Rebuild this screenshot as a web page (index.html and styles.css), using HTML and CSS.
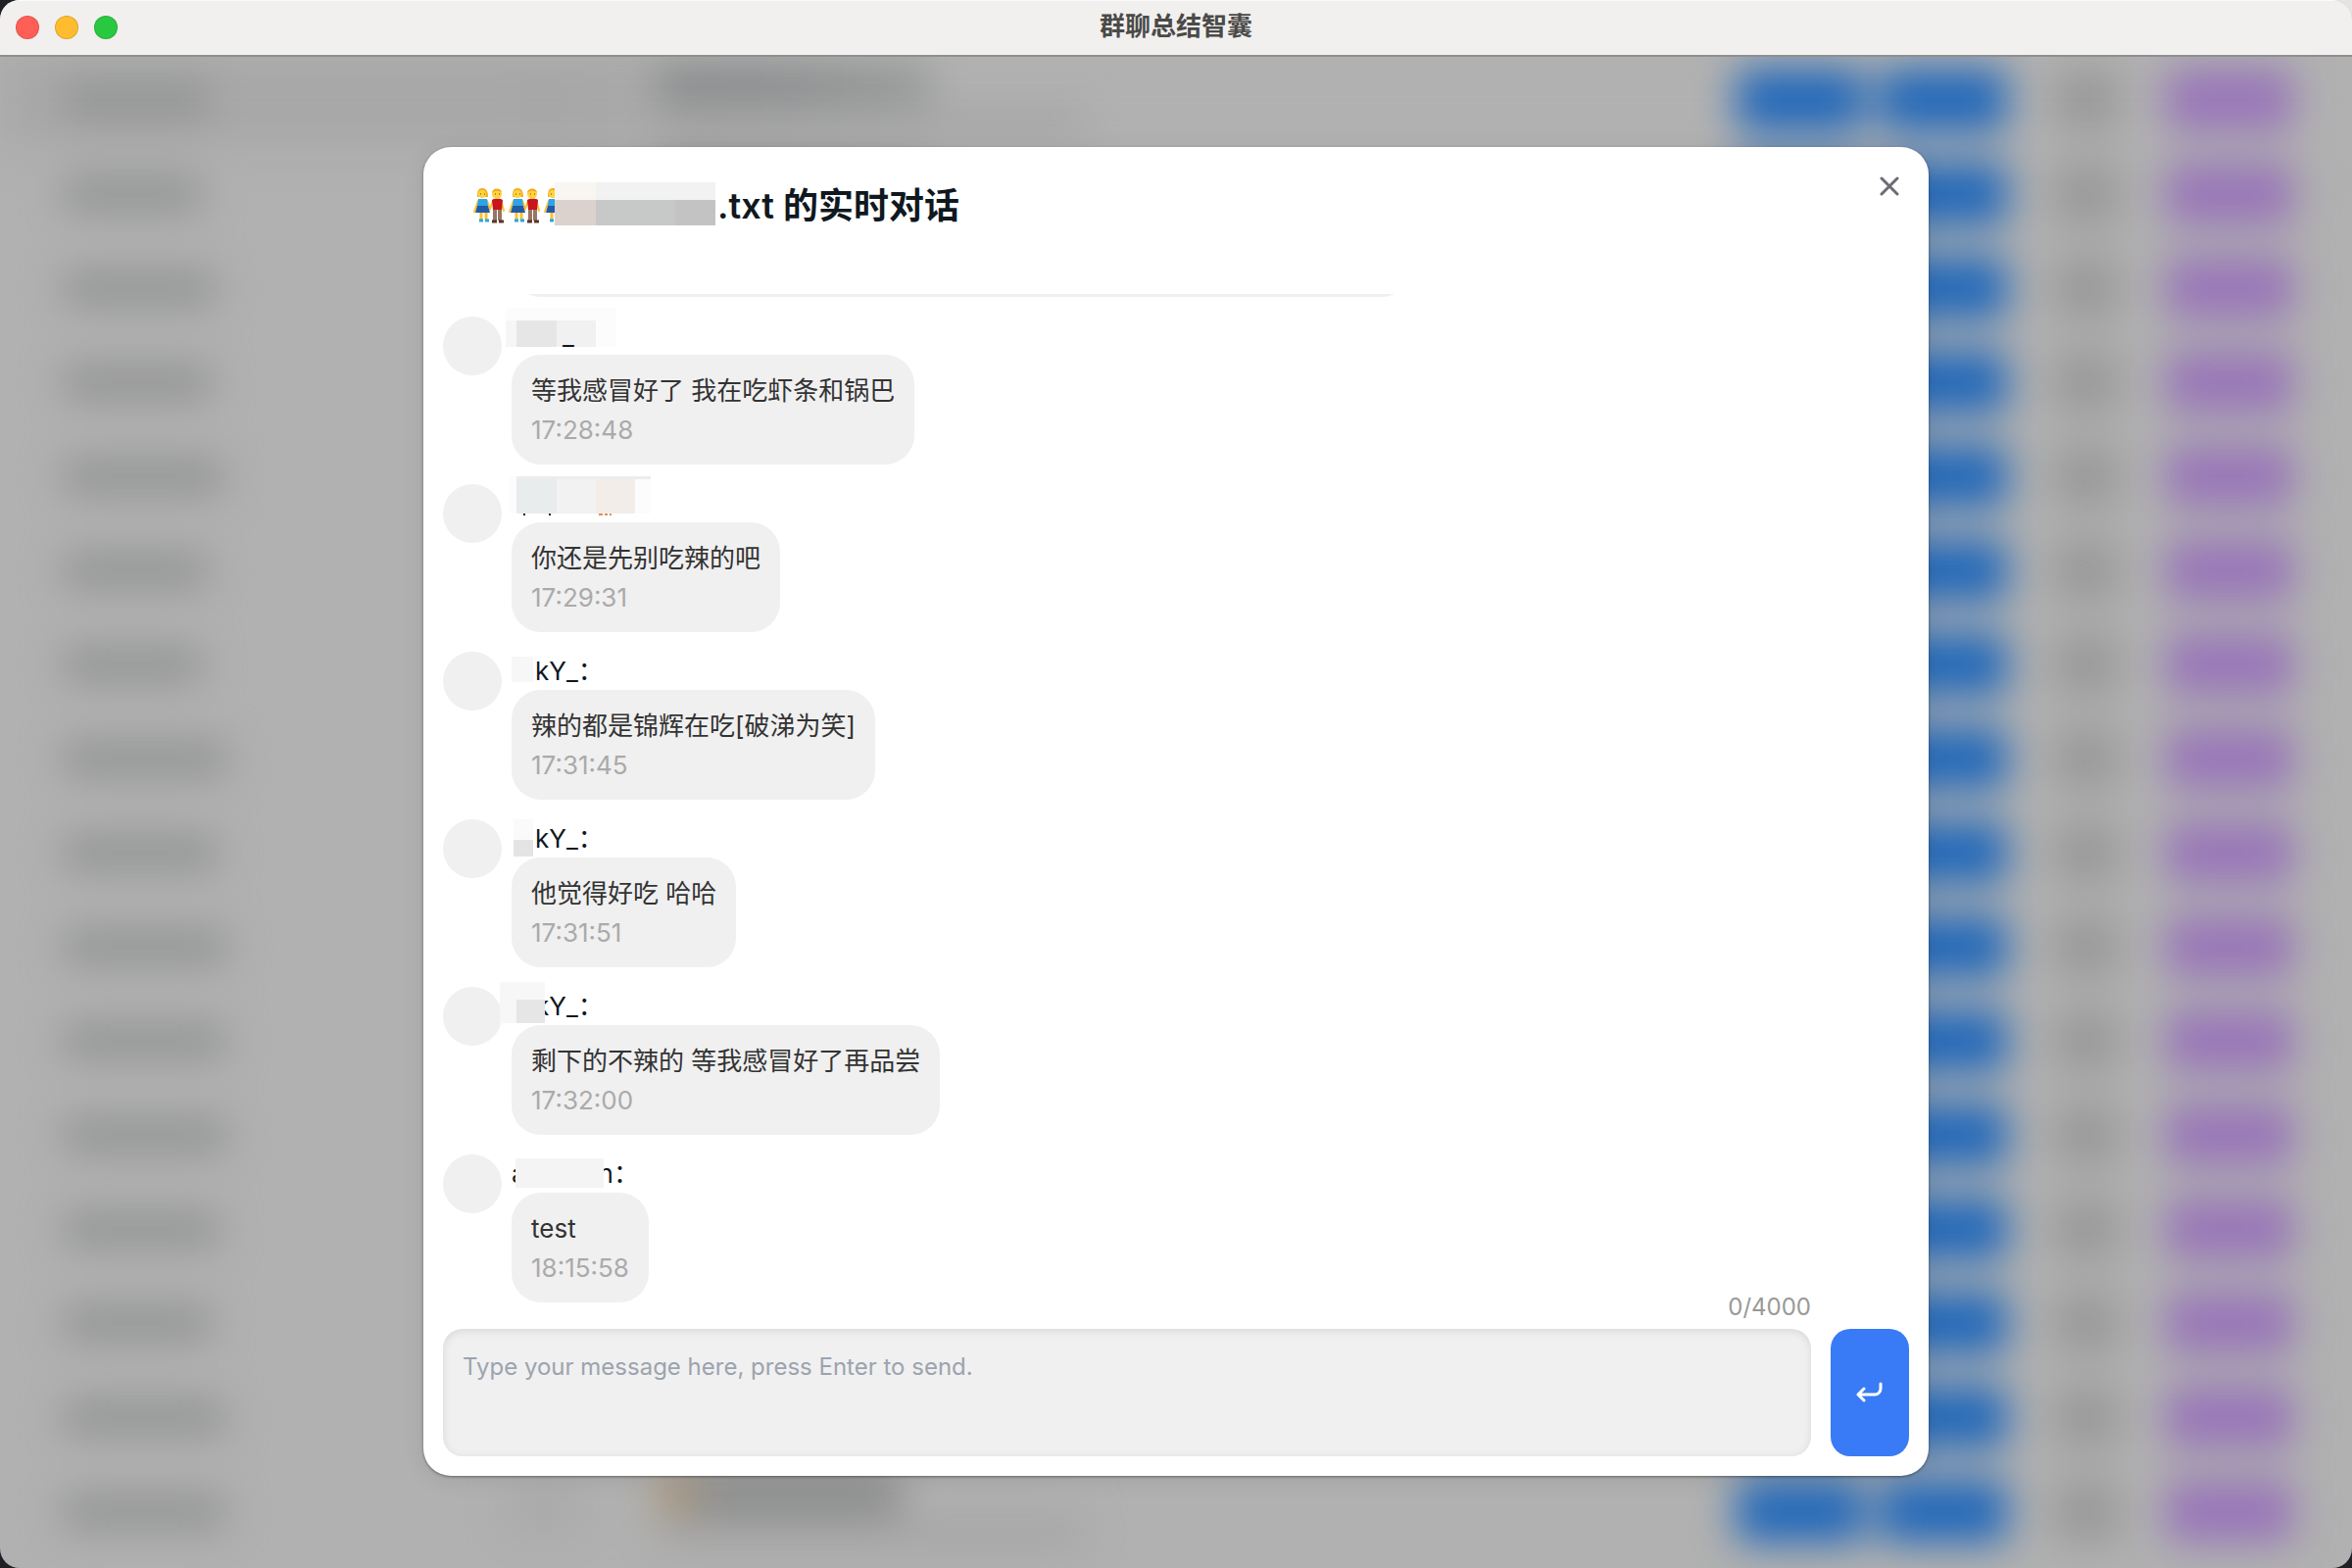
FILE: index.html
```html
<!DOCTYPE html>
<html lang="zh-CN">
<head>
  <meta charset="UTF-8">
  <meta name="viewport" content="width=device-width, initial-scale=1.0">
  <title>群聊总结智囊</title>
  <link rel="stylesheet" href="styles.css">
</head>
<body>
  <div class="window">
    <header class="titlebar">
      <div class="lights">
        <span class="light red"></span>
        <span class="light yellow"></span>
        <span class="light green"></span>
      </div>
      <h1>群聊总结智囊</h1>
    </header>

    <div class="stage">
      <!-- chat list behind the dialog -->
      <div class="rows" id="rows" aria-hidden="true"></div>

      <section class="modal" role="dialog" aria-labelledby="chatTitle">
        <div class="modal-header">
          <h2 id="chatTitle">
            <svg class="couples" viewBox="0 0 84 44" role="img" aria-label="couples">
              <defs>
                <g id="couple">
                  <path d="M9 27v11M14 27v11" stroke="#fbc02d" stroke-width="3"/>
                  <path d="M7 39h4M13 39h4" stroke="#29a8e0" stroke-width="3"/>
                  <path d="M6 19L2 30M15 19l3 8 3-8M29 18l3 11" fill="none" stroke="#fbc02d" stroke-width="2" stroke-linecap="round"/>
                  <path fill="#f2b01e" d="M5 15c0-6 1-9 5-9s6 3 6 9z"/>
                  <circle cx="10" cy="12" r="4" fill="#ffd23f"/>
                  <path fill="#2ea3e6" d="M6 17h9l1 7H5z"/>
                  <path fill="#2459a6" d="M5 24h11l2 7H3z"/>
                  <path d="M23 28v11M28 28v11" stroke="#9a7565" stroke-width="4"/>
                  <path d="M20 40h5M27 40h5" stroke="#5a3626" stroke-width="3"/>
                  <path fill="#c8151c" d="M20 18c3-2 8-2 11 0l-1 10h-9z"/>
                  <circle cx="25" cy="12" r="5" fill="#ffd23f"/>
                  <path fill="#f2a81e" d="M20 11c0-6 10-6 10 0-2-3-8-3-10 0z"/>
                  <path d="M8 12h1M12 12h1M23 12h1M27 12h1" stroke="#6b4a12" stroke-width="1"/>
                </g>
              </defs>
              <use href="#couple"/>
              <use href="#couple" x="36"/>
              <use href="#couple" x="72"/>
            </svg>
            <svg class="title-mask" viewBox="0 0 164 44"><path fill="#f2f2f2" d="M0 0h164v18H0z"/><path fill="#f9f5f1" d="M0 0h42v18H0z"/><path fill="#c7c8c8" d="M42 18h122v26H42z"/><path fill="#dbd2cd" d="M0 18h42v26H0z"/><path fill="#c3c3c3" d="M123 18h41v26h-41z"/></svg>
            <span>.txt 的实时对话</span>
          </h2>
          <button class="close-button" type="button" aria-label="Close">
            <svg width="20" height="20" viewBox="0 0 20 20"><path d="M2 2l16 16M18 2L2 18"/></svg>
          </button>
        </div>

        <div class="messages">
          <div class="message"><div class="bubble clipped"></div></div>

          <div class="message">
            <div class="avatar"></div>
            <div class="content">
              <div class="name indent-wide">
                <svg class="mask" viewBox="0 0 160 48"><path fill="#fcfcfc" d="M6 0h113v40H6z"/><path fill="#f6f6f6" d="M6 13h11v27H6z"/><path fill="#e6e6e6" d="M17 13h41v27H17z"/><path fill="#f1f1f1" d="M58 13h40v27H58z"/></svg>
                <span class="over">_</span>
              </div>
              <div class="bubble"><p>等我感冒好了 我在吃虾条和锅巴</p><time>17:28:48</time></div>
            </div>
          </div>

          <div class="message">
            <div class="avatar"></div>
            <div class="content">
              <div class="name">
                <svg class="mask" viewBox="0 0 160 48"><path fill="#fcfcfc" d="M10 1h144v38H10z"/><path fill="#ededed" d="M17 1h137v3H17z"/><path fill="#e9ecec" d="M17 4h41v35H17z"/><path fill="#f2f2f2" d="M58 4h40v35H58z"/><path fill="#f3ede9" d="M98 4h40v35H98z"/><path fill="#222" d="M24 39h2v2h-2zM50 39h2v2h-2z"/><path fill="#d9905f" d="M101 39h4v2h-4zM107 39h3v2h-3zM112 39h2v2h-2z"/></svg>
              </div>
              <div class="bubble"><p>你还是先别吃辣的吧</p><time>17:29:31</time></div>
            </div>
          </div>

          <div class="message">
            <div class="avatar"></div>
            <div class="content">
              <div class="name indent">kY_：
                <svg class="mask" viewBox="0 0 160 48"><path fill="#f7f7f7" d="M12 14h22v26H12z"/></svg>
              </div>
              <div class="bubble"><p>辣的都是锦辉在吃[破涕为笑]</p><time>17:31:45</time></div>
            </div>
          </div>

          <div class="message">
            <div class="avatar"></div>
            <div class="content">
              <div class="name indent">kY_：
                <svg class="mask" viewBox="0 0 160 48"><path fill="#fafafa" d="M14 9h20v21H14z"/><path fill="#e4e4e4" d="M14 30h20v17H14z"/></svg>
              </div>
              <div class="bubble"><p>他觉得好吃 哈哈</p><time>17:31:51</time></div>
            </div>
          </div>

          <div class="message">
            <div class="avatar"></div>
            <div class="content">
              <div class="name indent">kY_：
                <svg class="mask" viewBox="0 0 160 48"><path fill="#f7f7f7" d="M0 4h46v42H0z"/><path fill="#e6e6e6" d="M17 22h29v24H17z"/></svg>
              </div>
              <div class="bubble"><p>剩下的不辣的 等我感冒好了再品尝</p><time>17:32:00</time></div>
            </div>
          </div>

          <div class="message">
            <div class="avatar"></div>
            <div class="content">
              <div class="name split"><span>a</span><span>n：</span>
                <svg class="mask" viewBox="0 0 160 48"><path fill="#f4f4f4" d="M16 13h90v30H16z"/></svg>
              </div>
              <div class="bubble"><p>test</p><time>18:15:58</time></div>
            </div>
          </div>
        </div>

        <form class="composer">
          <div class="input-box">
            <span class="counter">0/4000</span>
            <textarea aria-label="Message" placeholder="Type your message here, press Enter to send." maxlength="4000"></textarea>
          </div>
          <button class="send-button" type="button" aria-label="Send">
            <svg width="28" height="24" viewBox="0 0 28 24"><path d="M25 3v5a6 6 0 0 1-6 6H3M8 8l-6 6 6 6"/></svg>
          </button>
        </form>
      </section>
    </div>
  </div>

  <script>
    const rows = document.getElementById("rows");
    const nameWidths = [150, 142, 156, 152, 164, 148, 142, 168, 158, 168, 166, 168, 160, 152, 166, 166];

    nameWidths.forEach(function(width) {
      const row = document.createElement("div");
      row.className = "row";
      row.innerHTML = `
        <div class="col-name"><i style="width: ${width}px"></i></div>
        <div class="col-count"><i></i></div>
        <div class="col-info"><i></i><i></i></div>
        <div class="col-actions"><i class="blue"></i><i class="blue"></i><i class="gray"></i><i class="purple"></i></div>`;
      rows.appendChild(row);
    });
  </script>
</body>
</html>
```

FILE: styles.css
```css
* {
  box-sizing: border-box;
}
body {
  margin: 0;
  background: linear-gradient(#e4e4e4, #e4e4e4) top right / 40px 40px no-repeat, #1f2024;
  font-family: Inter, "Noto Sans CJK SC", sans-serif;
  font-size: 26px;
  color: #10181f;
}
h1, h2, p {
  margin: 0;
}
button {
  border: none;
  padding: 0;
  cursor: pointer;
}
svg {
  display: block;
}

.window {
  height: 100vh;
  display: flex;
  flex-direction: column;
  border-radius: 20px;
  overflow: hidden;
  background-color: #b1b1b1;
}
.titlebar {
  height: 58px;
  display: grid;
  grid-template-columns: 1fr auto 1fr;
  align-items: center;
  padding: 0 16px 1px;
  background-color: #f1f0ee;
  border-top: 1px solid #fafafa;
  border-bottom: 2px solid #8f8f8f;
}
.titlebar h1 {
  font-size: 26px;
  line-height: 38px;
  padding-bottom: 2px;
  font-weight: bold;
  color: #4a4a48;
}
.lights {
  display: flex;
  gap: 16px;
}
.light {
  width: 24px;
  height: 24px;
  border-radius: 50%;
  border: 1px solid rgba(0, 0, 0, 0.12);
}
.red {
  background-color: #ff5f57;
}
.yellow {
  background-color: #febc2e;
}
.green {
  background-color: #28c840;
}

.stage {
  flex: 1;
  min-height: 0;
  position: relative;
  display: flex;
  justify-content: center;
  padding: 92px 0 94px;
  overflow: hidden;
}
.rows {
  position: absolute;
  inset: -4px 0 auto;
  filter: blur(20px);
}
.row {
  height: 96px;
  display: flex;
  align-items: center;
  padding: 0 60px;
}
.row:first-child {
  background: linear-gradient(to right, #a8a8a8 25%, #b1b1b1 40%);
}
.row i {
  display: block;
  border-radius: 8px;
}
.col-name {
  width: 460px;
}
.col-name i {
  height: 36px;
  margin-left: 4px;
  background-color: #929393;
}
.col-count {
  width: 150px;
}
.col-count i {
  width: 70px;
  height: 32px;
  background-color: #a6a6a6;
}
.col-info {
  flex: 1;
}
.col-info i {
  width: 280px;
  height: 36px;
  background: linear-gradient(to right, #868889 40%, #949696);
}
.col-info i + i {
  width: 440px;
  height: 24px;
  margin-top: 8px;
  background: #a2a2a2;
}
.row:last-child .col-info i:first-child {
  width: 250px;
  background: linear-gradient(to right, #a8906f 10%, #848685 20%);
}
.col-actions {
  display: flex;
  align-items: center;
  gap: 16px;
}
.col-actions i {
  width: 130px;
  height: 64px;
}
.col-actions .blue {
  background-color: #2268b9;
}
.col-actions .gray {
  width: 66px;
  margin: 0 32px;
  background-color: #999;
}
.col-actions .purple {
  background-color: #9876b8;
}

.modal {
  position: relative;
  width: 64%;
  display: flex;
  flex-direction: column;
  padding: 20px;
  border-radius: 28px;
  background-color: #fff;
  box-shadow: 0 1px 3px rgba(0, 0, 0, 0.4), 0 4px 24px rgba(0, 0, 0, 0.08);
}
.modal-header {
  height: 130px;
  flex: none;
  display: flex;
  justify-content: space-between;
  align-items: flex-start;
}
.modal-header h2 {
  display: flex;
  align-items: flex-start;
  margin: 16px 0 0 30px;
  font-size: 36px;
  line-height: 48px;
  font-weight: 600;
}
.couples {
  width: 84px;
  height: 44px;
}
.title-mask {
  width: 164px;
  height: 44px;
  margin-right: 2px;
}
.close-button {
  width: 40px;
  height: 40px;
  display: grid;
  place-items: center;
  background: none;
}
.close-button path {
  fill: none;
  stroke: #6b6b72;
  stroke-width: 3;
  stroke-linecap: round;
}

.messages {
  flex: 1;
  min-height: 0;
  display: flex;
  flex-direction: column;
  justify-content: flex-end;
  gap: 20px;
  overflow: hidden;
  margin-bottom: 27px;
}
.message {
  flex: none;
  display: flex;
  gap: 10px;
}
.avatar {
  flex: none;
  width: 60px;
  height: 60px;
  border-radius: 50%;
  background-color: #f0f0f0;
}
.name {
  position: relative;
  height: 39px;
  line-height: 39px;
}
.indent {
  padding-left: 24px;
}
.indent-wide {
  padding-left: 52px;
}
.split {
  display: flex;
  gap: 74px;
}
.mask {
  position: absolute;
  left: -12px;
  top: -9px;
  width: 160px;
  height: 48px;
}
.over {
  position: relative;
}
.bubble {
  width: fit-content;
  padding: 17px 20px 15px;
  border-radius: 30px;
  background-color: #f0f0f0;
  color: #333;
  line-height: 40px;
}
.bubble time {
  display: block;
  color: #aaa;
}
.clipped {
  width: 918px;
  height: 112px;
  margin-left: 70px;
}

.composer {
  flex: none;
  display: flex;
  gap: 20px;
}
.input-box {
  position: relative;
  flex: 1;
}
.counter {
  position: absolute;
  right: 0;
  bottom: calc(100% + 8px);
  font-size: 24px;
  line-height: 28px;
  color: #999;
}
.input-box textarea {
  display: block;
  width: 100%;
  height: 130px;
  padding: 20px;
  border: none;
  border-radius: 20px;
  resize: none;
  background-color: #f0f0f0;
  box-shadow: inset 0 2px 8px rgba(0, 0, 0, 0.1);
  font-family: inherit;
  font-size: 24px;
  line-height: 38px;
}
.input-box textarea::placeholder {
  color: #9ca3af;
}
.send-button {
  width: 80px;
  height: 130px;
  display: grid;
  place-items: center;
  border-radius: 20px;
  background-color: #397bf6;
}
.send-button path {
  fill: none;
  stroke: #fff;
  stroke-width: 3;
  stroke-linecap: round;
  stroke-linejoin: round;
}
```
